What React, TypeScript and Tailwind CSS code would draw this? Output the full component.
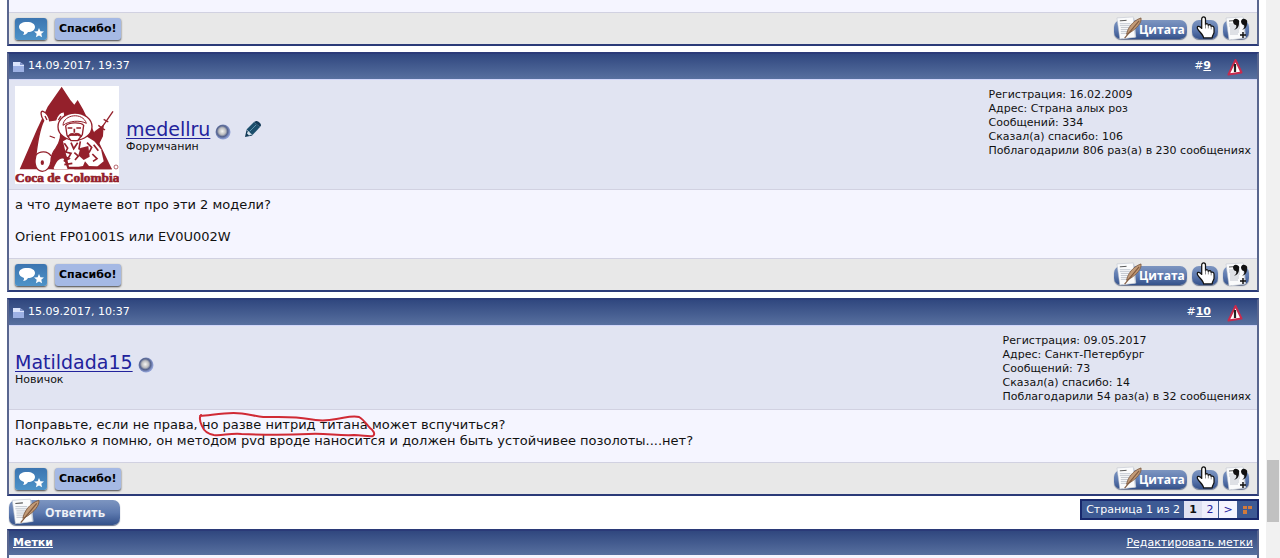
import type { ReactNode } from 'react'

type Post = {
  id: number
  date: string
  user: string
  rank: string
  avatar?: boolean
  canEdit?: boolean
  info: string[]
  body: ReactNode
}

const posts: Post[] = [
  {
    id: 9,
    date: '14.09.2017, 19:37',
    user: 'medellru',
    rank: 'Форумчанин',
    avatar: true,
    canEdit: true,
    info: [
      'Регистрация: 16.02.2009',
      'Адрес: Страна алых роз',
      'Сообщений: 334',
      'Сказал(а) спасибо: 106',
      'Поблагодарили 806 раз(а) в 230 сообщениях',
    ],
    body: (
      <>
        а что думаете вот про эти 2 модели?
        <br />
        <br />
        Orient FP01001S или EV0U002W
      </>
    ),
  },
  {
    id: 10,
    date: '15.09.2017, 10:37',
    user: 'Matildada15',
    rank: 'Новичок',
    info: [
      'Регистрация: 09.05.2017',
      'Адрес: Санкт-Петербург',
      'Сообщений: 73',
      'Сказал(а) спасибо: 14',
      'Поблагодарили 54 раз(а) в 32 сообщениях',
    ],
    body: (
      <>
        Поправьте, если не права, <Circled>но разве нитрид титана</Circled> может вспучиться?
        <br />
        насколько я помню, он методом pvd вроде наносится и должен быть устойчивее позолоты....нет?
      </>
    ),
  },
]

// Text with a hand-drawn red marker line around it
function Circled({ children }: { children: ReactNode }) {
  return (
    <span className="relative">
      {children}
      <svg
        className="pointer-events-none absolute -top-1 -left-1 h-6 w-[calc(100%+12px)] overflow-visible"
        viewBox="0 0 180 24"
        preserveAspectRatio="none"
        fill="none"
        stroke="#d02a35"
        strokeWidth="2"
        strokeLinecap="round"
        strokeLinejoin="round"
        aria-hidden="true"
      >
        <path d="M3 2C1 5 2 9 4 13C6 18 10 21 16 22C24 23 32 20 44 21C68 22 92 22 112 21C130 20 142 23 158 22C166 22 173 24 177 23C180 21 177 17 174 15C171 12 168 7 163 4C156 2 148 5 140 6C130 8 122 8 112 6C98 3 82 4 66 4C56 3 48 0 36 0C24 0 14 2 2 3" />
      </svg>
    </span>
  )
}

function PageIcon() {
  return (
    <svg width="11" height="12" viewBox="0 0 11 12" aria-hidden="true">
      <path d="M0 1h7l4 3v7H0z" fill="#dbe4fc" />
      <path d="M0 5h11v6H0z" fill="#9db1e4" />
      <path d="M7 1v3h4z" fill="#8195cb" />
    </svg>
  )
}

function ReportIcon() {
  return (
    <svg width="16" height="18" viewBox="0 0 16 18" aria-hidden="true">
      <path d="M8.500 2L14.500 14.500 1.500 16.500z" fill="#fff" stroke="#c92a4c" strokeWidth="2" strokeLinejoin="round" />
      <path d="M8 6v8" stroke="#222" strokeWidth="2.200" />
    </svg>
  )
}

function StatusDot() {
  return (
    <svg width="16" height="16" viewBox="0 0 16 16" aria-hidden="true">
      <defs>
        <radialGradient id="dot" cx="45%" cy="45%" r="52%">
          <stop offset="0" stopColor="#f6f6f4" />
          <stop offset="0.45" stopColor="#b9babd" />
          <stop offset="0.7" stopColor="#53618c" />
          <stop offset="1" stopColor="#8fa0d6" />
        </radialGradient>
      </defs>
      <circle cx="8" cy="8" r="7.500" fill="url(#dot)" />
    </svg>
  )
}

function PencilIcon() {
  return (
    <svg width="18" height="18" viewBox="0 0 18 18" aria-hidden="true">
      <path d="M1 17l1.500-7 6 5.500z" fill="#123a57" />
      <path d="M2.500 9.500L10 2l6 5-7.500 8z" fill="#1b4e6c" />
      <path d="M11 1.500c1.500-2 6.500 1.500 6 4L16 7l-6-5z" fill="#123a57" />
      <path d="M5.500 11.500L12 5" stroke="#5f93ad" strokeWidth="1" />
      <path d="M3 13.500l1-2.500 3.500 3.500-2.500 1z" fill="#d5e3ec" />
    </svg>
  )
}

// Sheet of paper shared by the quote and reply buttons
function Sheet() {
  return (
    <>
      <path d="M7 4L21 2 23 22 9 24z" fill="#c4cbd6" />
      <path d="M3 2l17-1 2 21-16 2z" fill="#fafbfc" stroke="#b6bdc9" strokeWidth="0.5" />
      <path d="M6 5l7-.5" stroke="#555" />
      <path d="M6 8h11M6 10h11M7 12h10M7 14h9M7 16h9M7 18h8" stroke="#b4bac4" strokeWidth="0.8" />
    </>
  )
}

function SheetWithQuill({ className }: { className: string }) {
  return (
    <svg className={`absolute left-0 ${className}`} viewBox="0 0 30 27" aria-hidden="true">
      <Sheet />
      <path d="M13 19C14 13 19 5 28 2C29 7 23 13 17 17z" fill="#c29b78" stroke="#775238" strokeWidth="0.8" />
      <path d="M11 23L26 5" stroke="#80593d" strokeWidth="1.200" />
    </svg>
  )
}

function HandIcon() {
  return (
    <svg className="absolute -top-1 left-1 h-[23px] w-[19px]" viewBox="0 0 20 24" aria-hidden="true">
      <path
        d="M6 13V3C6 0 10 0 10 3V9C11 7 13 8 13 10C14 8 16 9 16 11C18 10 19 11 19 13V17C19 19 17 20 17 23H8C8 20 4 17 2 14C0 11 3 9 6 13z"
        fill="#fff"
        stroke="#111"
        strokeWidth="1.300"
        strokeLinejoin="round"
      />
      <path d="M10 8v5M13 9v4M16 10v4" stroke="#555" strokeWidth="0.7" />
    </svg>
  )
}

function MultiQuoteIcon() {
  return (
    <svg className="absolute -top-1 left-0 h-[26px] w-[26px]" viewBox="0 0 26 26" aria-hidden="true">
      <Sheet />
      <path
        d="M10 5a3 3 0 1 1 6 2c0 4-2 6-5 7 2-2 3-3 2-5-2 0-3-2-3-4zM18 5a3 3 0 1 1 6 2c0 4-2 6-5 7 2-2 3-3 2-5-2 0-3-2-3-4z"
        fill="#111"
      />
      <path d="M20 16v6M17 19h6" stroke="#111" strokeWidth="1.500" />
    </svg>
  )
}

function Avatar() {
  return (
    <svg className="h-[98px] w-[104px] bg-white" viewBox="0 0 312 294" role="img" aria-label="Coca de Colombia">
      <path d="M140 2L166 42 178 56 188 42 204 70 291 250H14L66 130 98 62z" fill="#94202b" />
      {/* donkey */}
      <path
        d="M86 104C76 88 76 74 84 76C94 80 102 92 104 104L122 102C126 88 136 76 148 78C152 92 146 104 136 114C140 140 136 170 122 188C110 202 108 214 108 226C106 244 94 256 82 256C64 254 56 236 62 212C66 178 72 132 86 104z"
        fill="#fff"
        stroke="#94202b"
        strokeWidth="4"
      />
      <path d="M62 208C74 194 98 194 108 210M104 150l16 6M90 90l6 12M138 90l-8 12" fill="none" stroke="#94202b" strokeWidth="4" />
      <ellipse cx="82" cy="230" rx="5" ry="7" fill="#94202b" />
      {/* reins and saddle */}
      <path d="M112 214L136 180 150 190 160 250H110z" fill="#94202b" />
      <path d="M116 246C124 226 134 214 146 218L158 250H118z" fill="#fff" />
      {/* rifle */}
      <path d="M236 160L294 76" stroke="#94202b" strokeWidth="4" />
      <path d="M224 180L240 138 264 120 262 150 246 182zM250 118l20 14M266 100l14 8" fill="#94202b" stroke="#94202b" strokeWidth="4" />
      {/* rider */}
      <path d="M144 166L168 152H216L238 166 258 190 266 226 246 242H162z" fill="#fff" />
      <ellipse cx="180" cy="122" rx="51" ry="41" fill="#fff" stroke="#94202b" strokeWidth="4" />
      <path d="M144 118C146 84 204 78 214 112C196 102 162 104 144 118z" fill="#fff" stroke="#94202b" strokeWidth="3" />
      <path d="M152 120C160 108 198 108 206 118L202 146 188 164H168L156 148z" fill="#fff" stroke="#94202b" strokeWidth="4" />
      <path d="M158 126h14M184 126h14M178 128v12" stroke="#94202b" strokeWidth="5" />
      <path d="M158 152C164 140 174 142 178 144C184 140 196 142 200 152L188 148H168z" fill="#94202b" stroke="#94202b" strokeWidth="3" />
      <path
        d="M148 172l10 14-6 12 16 4-8 14M168 170l8 18 12-18M196 166l-4 22 14 6M216 170l14 14-8 16M236 176l14 18M142 208l20 10-16 8M178 200l12 10-10 12M204 204l12 10M232 204l14 14-12 8M148 236l24-4"
        fill="none"
        stroke="#94202b"
        strokeWidth="5"
      />
      <path d="M196 186L220 180 224 212 206 222 190 208z" fill="#94202b" />
      <path d="M178 246L204 240 210 226 222 240 284 243 291 250H178z" fill="#94202b" />
      <circle cx="303" cy="243" r="6" fill="none" stroke="#94202b" strokeWidth="2" />
      <text x="0" y="289" fontSize="40" fontWeight="700" fill="#94202b" stroke="#94202b" strokeWidth="2" fontFamily="'Liberation Serif', serif">
        Coca de Colombia
      </text>
    </svg>
  )
}

const pill = 'relative rounded-[7px] bg-linear-to-b from-[#7d95c0] via-[#5f7bb0] to-[#34518a] shadow-[0_1px_1px_#66718a]'

function PostFooter() {
  return (
    <div className="flex h-8 items-center justify-between border-t border-[#d1d1e1] bg-[#e8e8e8] pt-px pr-2 pl-1.5">
      <div className="flex gap-2">
        <button type="button" aria-label="Отзыв" className="h-[22px] w-8 rounded-[3px] bg-linear-to-b from-[#3c75b0] to-[#4e93c8] pl-1 shadow-[0_1px_2px_#444]">
          <svg width="26" height="20" viewBox="0 0 26 20" aria-hidden="true">
            <path d="M8 3c5 0 8 2 8 5s-3 5-7 5c-1 2-3 3-5 3 1-1 1-2 1-3-3-1-5-3-5-5 0-3 3-5 8-5z" fill="#fff" />
            <path d="M20 9l1.400 3.200 3.600.300-2.700 2.300.800 3.400-3.100-1.800-3.100 1.800.800-3.400-2.700-2.300 3.600-.300z" fill="#fff" />
          </svg>
        </button>
        <button type="button" className="h-[22px] rounded-[3px] bg-[#a5b9e4] px-1 text-[11px] leading-[22px] font-bold text-black shadow-[0_1px_2px_#444]">
          Спасибо!
        </button>
      </div>
      <div className="flex gap-[5px]">
        <button type="button" className={`${pill} h-[19px] w-[73px] pl-[25px] text-left text-[12px] leading-5 font-bold text-white font-['Open_Sans',sans-serif]`}>
          <SheetWithQuill className="-top-1 h-[26px] w-[29px]" />
          Цитата
        </button>
        <button type="button" aria-label="Быстрый ответ" className={`${pill} h-[19px] w-[26px]`}>
          <HandIcon />
        </button>
        <button type="button" aria-label="Мультицитирование" className={`${pill} h-[19px] w-[26px]`}>
          <MultiQuoteIcon />
        </button>
      </div>
    </div>
  )
}

const frame = 'border-2 border-[#2b3a78] border-x-[#59668f]'
const bar = 'bg-linear-to-b from-[#30477f] to-[#58709f] text-white'

function PostCard({ post }: { post: Post }) {
  return (
    <article className={frame}>
      <header className={`${bar} flex h-[25px] items-center justify-between pr-3.5 pl-1 text-[11px]`}>
        <span className="flex items-center gap-1">
          <PageIcon />
          {post.date}
        </span>
        <span className="flex items-center gap-4">
          <span>
            #<a href={`#post${post.id}`} className="font-bold underline">{post.id}</a>
          </span>
          <a href="#report" aria-label="Пожаловаться">
            <ReportIcon />
          </a>
        </span>
      </header>
      <div className="flex justify-between border-t border-[#d1d6fa] bg-[#e1e4f2] px-1.5 pt-1.5 pb-[5px]">
        <div className="flex items-center gap-[7px]">
          {post.avatar && <Avatar />}
          <div>
            <div className="flex items-center gap-[5px]">
              <a href="#user" className="text-[19px] leading-6 text-[#22229c] underline underline-offset-2">{post.user}</a>
              <span className="pt-1.5"><StatusDot /></span>
              {post.canEdit && <a href="#edit" aria-label="Редактировать" className="pl-2"><PencilIcon /></a>}
            </div>
            <div className="text-[11px] leading-3">{post.rank}</div>
          </div>
        </div>
        <ul className="pt-0.5 text-[11px] leading-[14px]">
          {post.info.map((line) => (
            <li key={line}>{line}</li>
          ))}
        </ul>
      </div>
      <div className="border-t border-[#d1d1e1] bg-[#f5f5ff] px-1.5 pt-[7px] pb-[13px] text-[13px] leading-4">{post.body}</div>
      <PostFooter />
    </article>
  )
}

function Pagination() {
  return (
    <nav aria-label="Страницы" className="flex h-[21px] items-stretch border-2 border-[#18286c] bg-[#3d5a94] text-[11px] leading-[18px]">
      <span className="px-1 text-white">Страница 1 из 2</span>
      <span className="w-[18px] bg-[#dfe1f1] text-center font-bold">1</span>
      <a href="#2" className="w-4 bg-[#f0f0fc] text-center text-[#22229c]">2</a>
      <a href="#next" className="ml-px w-[18px] bg-[#f5f5ff] text-center text-[#22229c]">&gt;</a>
      <button type="button" aria-label="Перейти к странице" className="flex w-5 items-center justify-center">
        <svg width="9" height="8" viewBox="0 0 9 8" aria-hidden="true">
          <path d="M0 0h4v3H0zM5 0h4v3H5zM0 4h4v4H0z" fill="#d27a3c" />
        </svg>
      </button>
    </nav>
  )
}

export default function App() {
  return (
    <div className="flex h-screen overflow-hidden bg-white font-['DejaVu_Sans',Verdana,sans-serif] text-[#111]">
      <main className="min-w-0 flex-1 px-[7px]">
        <div className="flex flex-col gap-1.5">
          <div className={`border-t-0 ${frame}`}>
            <div className="h-3 bg-[#f5f5ff]" />
            <PostFooter />
          </div>
          {posts.map((post) => (
            <PostCard key={post.id} post={post} />
          ))}
        </div>
        <div className="flex items-start justify-between pt-[3px] pb-1">
          <button
            type="button"
            className={`${pill} mt-px ml-0.5 h-[25px] w-[111px] pl-9 text-left text-[12px] leading-[25px] font-bold text-[#eef1f7] font-['Open_Sans',sans-serif]`}
          >
            <SheetWithQuill className="-top-0.5 h-[29px] w-[32px]" />
            Ответить
          </button>
          <Pagination />
        </div>
        <section className={frame}>
          <header className={`${bar} flex h-6 items-center justify-between px-1 text-[11px]`}>
            <a href="#tags" className="font-bold underline">Метки</a>
            <a href="#edit-tags" className="underline">Редактировать метки</a>
          </header>
          <div className="h-8 bg-[#f5f5ff]" />
        </section>
      </main>
      <div className="flex w-3.5 flex-col items-center bg-[#f1f1f1] pt-[460px]" aria-hidden="true">
        <div className="h-[62px] w-3 bg-[#c1c1c1]" />
      </div>
    </div>
  )
}
